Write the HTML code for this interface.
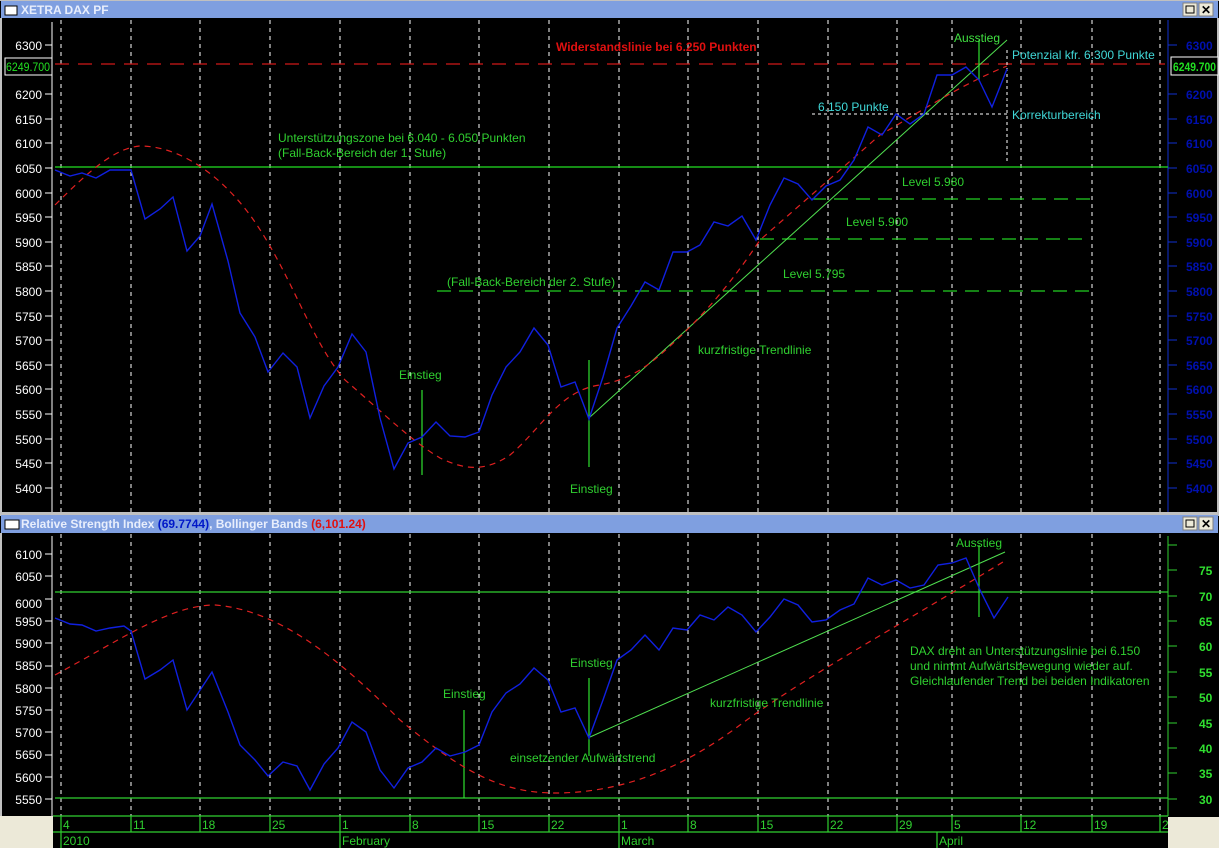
<!DOCTYPE html>
<html><head><meta charset="utf-8"><style>
html,body{margin:0;padding:0;background:#000;width:1219px;height:848px;overflow:hidden}
svg{display:block}
text{font-family:"Liberation Sans",Arial,sans-serif;font-size:12px}
</style></head><body>
<svg width="1219" height="848" viewBox="0 0 1219 848" xmlns="http://www.w3.org/2000/svg">
<rect width="1219" height="848" fill="#000"/>
<rect x="0" y="0" width="1219" height="1" fill="#c0c0c0"/>
<rect x="1" y="1" width="1217" height="17" fill="#7f9fe0"/>
<rect x="5" y="6" width="12" height="9" fill="#fff" stroke="#000" stroke-width="1"/>
<text x="21" y="14" fill="#e8eefc" font-weight="bold" font-size="12">XETRA DAX PF</text>
<rect x="1183" y="3" width="14" height="13" fill="#ece9d8" stroke="#808080"/><rect x="1186" y="6" width="8" height="7" fill="none" stroke="#000"/>
<rect x="1199" y="3" width="14" height="13" fill="#ece9d8" stroke="#808080"/><text x="1201" y="14" font-size="13" font-weight="bold" fill="#000">✕</text>
<rect x="0" y="18" width="2" height="495" fill="#c0c0c0"/>
<rect x="1217" y="18" width="2" height="495" fill="#c0c0c0"/>
<rect x="0" y="512" width="1219" height="4" fill="#c0c0c0"/>
<rect x="1" y="515" width="1217" height="18" fill="#7f9fe0"/>
<rect x="5" y="520" width="14" height="9" fill="#fff" stroke="#000"/>
<text x="21" y="528" fill="#e8eefc" font-weight="bold" font-size="12">Relative Strength Index <tspan fill="#0018c8">(69.7744)</tspan>, Bollinger Bands <tspan fill="#e01010">(6,101.24)</tspan></text>
<rect x="1183" y="517" width="14" height="13" fill="#ece9d8" stroke="#808080"/><rect x="1186" y="520" width="8" height="7" fill="none" stroke="#000"/>
<rect x="1199" y="517" width="14" height="13" fill="#ece9d8" stroke="#808080"/><text x="1201" y="528" font-size="13" font-weight="bold" fill="#000">✕</text>
<rect x="0" y="533" width="2" height="283" fill="#c0c0c0"/>
<rect x="0" y="816" width="53" height="32" fill="#ece9d8"/>

<g stroke="#fff" stroke-width="1" stroke-dasharray="4,4">
<path d="M61 20V512M131 20V512M200 20V512M270 20V512M340 20V512M410 20V512M479 20V512M549 20V512M619 20V512M688 20V512M758 20V512M828 20V512M897 20V512M952 20V512M1021 20V512M1092 20V512M1160 20V512"/>
<path d="M61 534V816M131 534V816M200 534V816M270 534V816M340 534V816M410 534V816M479 534V816M549 534V816M619 534V816M688 534V816M758 534V816M828 534V816M897 534V816M952 534V816M1021 534V816M1092 534V816M1160 534V816"/>
</g>

<g stroke="#fff"><path d="M52 22V512"/></g>
<g fill="#fff" text-anchor="end" font-size="12">
<text x="42" y="50">6300</text><text x="42" y="99">6200</text><text x="42" y="124">6150</text><text x="42" y="148">6100</text><text x="42" y="173">6050</text><text x="42" y="198">6000</text><text x="42" y="222">5950</text><text x="42" y="247">5900</text><text x="42" y="271">5850</text><text x="42" y="296">5800</text><text x="42" y="321">5750</text><text x="42" y="345">5700</text><text x="42" y="370">5650</text><text x="42" y="394">5600</text><text x="42" y="419">5550</text><text x="42" y="444">5500</text><text x="42" y="468">5450</text><text x="42" y="493">5400</text>
</g>
<g stroke="#fff"><path d="M45 45h7M45 94h7M45 119h7M45 143h7M45 168h7M45 193h7M45 217h7M45 242h7M45 266h7M45 291h7M45 316h7M45 340h7M45 365h7M45 389h7M45 414h7M45 439h7M45 463h7M45 488h7"/></g>
<rect x="5" y="58" width="47" height="17" fill="#000" stroke="#fff"/>
<text x="6" y="71" fill="#22e022" font-size="11" textLength="44" lengthAdjust="spacingAndGlyphs">6249.700</text>

<path d="M1168 20V512" stroke="#1030d0"/>
<g stroke="#1030d0"><path d="M1168 45h9M1168 94h9M1168 119h9M1168 143h9M1168 168h9M1168 193h9M1168 217h9M1168 242h9M1168 266h9M1168 291h9M1168 316h9M1168 340h9M1168 365h9M1168 389h9M1168 414h9M1168 439h9M1168 463h9M1168 488h9"/></g>
<g fill="#0010b0" font-weight="bold" font-size="12" font-family="Liberation Serif">
<text x="1186" y="50">6300</text><text x="1186" y="99">6200</text><text x="1186" y="124">6150</text><text x="1186" y="148">6100</text><text x="1186" y="173">6050</text><text x="1186" y="198">6000</text><text x="1186" y="222">5950</text><text x="1186" y="247">5900</text><text x="1186" y="271">5850</text><text x="1186" y="296">5800</text><text x="1186" y="321">5750</text><text x="1186" y="345">5700</text><text x="1186" y="370">5650</text><text x="1186" y="394">5600</text><text x="1186" y="419">5550</text><text x="1186" y="444">5500</text><text x="1186" y="468">5450</text><text x="1186" y="493">5400</text>
</g>
<rect x="1171" y="57" width="47" height="18" fill="#000" stroke="#fff"/>
<text x="1173" y="71" fill="#22e022" font-size="11" font-weight="bold" textLength="43" lengthAdjust="spacingAndGlyphs">6249.700</text>

<path d="M55 64H1165" stroke="#d01818" stroke-width="1.3" stroke-dasharray="14,9"/>
<path d="M55 167H1168" stroke="#22e022" stroke-width="1.2"/>
<g stroke="#22d022" stroke-width="1.2" stroke-dasharray="14,8">
<path d="M812 199H1090M760 239H1090M437 291H1090"/></g>
<path d="M812 114H1007M1007 50V162" stroke="#fff" stroke-dasharray="3,3"/>
<path d="M590 417L1007 40" stroke="#50e050"/>
<path d="M979 40V80M422 390V475M589 360V467" stroke="#30e030" stroke-width="1.2"/>
<path d="M55 205 C90 170 115 148 140 146 C180 146 220 175 250 215 C290 270 310 340 345 380 C380 410 410 440 440 458 C465 470 485 472 510 455 C540 430 560 390 600 385 C625 380 640 372 660 355 C700 320 730 285 760 240 C800 205 840 170 880 135 C920 112 960 85 1007 66" fill="none" stroke="#e02020" stroke-width="1.2" stroke-dasharray="6,5"/>
<polyline fill="none" stroke="#1020e0" stroke-width="1.4" points="55,170 70,176 82,173 96,178 110,170 124,170 131,170 145,219 160,209 173,197 187,251 200,236 212,204 228,261 240,313 255,337 268,372 283,353 297,367 310,418 324,386 338,367 352,334 366,352 380,418 394,469 408,443 422,437 436,422 450,436 465,437 479,432 492,395 506,367 520,352 534,328 548,345 561,387 575,382 589,419 603,377 617,328 631,306 645,282 659,290 673,252 687,252 700,245 714,222 728,226 742,216 756,240 770,205 784,178 798,184 812,200 826,186 840,180 854,160 868,127 882,135 896,114 910,124 924,114 937,75 952,75 966,67 979,80 992,107 1007,69"/>

<text x="556" y="51" fill="#e01010" font-weight="bold">Widerstandslinie bei 6.250 Punkten</text>
<text x="954" y="42" fill="#40e040">Ausstieg</text>
<text x="1012" y="59" fill="#40d8d8">Potenzial kfr. 6.300 Punkte</text>
<text x="818" y="111" fill="#40d8d8">6.150 Punkte</text>
<text x="1012" y="119" fill="#40d8d8">Korrekturbereich</text>
<text x="278" y="142" fill="#30d030">Unterstützungszone bei 6.040 - 6.050 Punkten</text>
<text x="278" y="157" fill="#30d030">(Fall-Back-Bereich der 1. Stufe)</text>
<text x="902" y="186" fill="#30d030">Level 5.980</text>
<text x="846" y="226" fill="#30d030">Level 5.900</text>
<text x="783" y="278" fill="#30d030">Level 5.795</text>
<text x="447" y="286" fill="#30d030">(Fall-Back-Bereich der 2. Stufe)</text>
<text x="698" y="354" fill="#30d030">kurzfristige Trendlinie</text>
<text x="399" y="379" fill="#30d030">Einstieg</text>
<text x="570" y="493" fill="#30d030">Einstieg</text>

<path d="M52 536V816" stroke="#fff"/>
<g fill="#fff" text-anchor="end" font-size="12">
<text x="42" y="559">6100</text><text x="42" y="581">6050</text><text x="42" y="608">6000</text><text x="42" y="626">5950</text><text x="42" y="648">5900</text><text x="42" y="670">5850</text><text x="42" y="693">5800</text><text x="42" y="715">5750</text><text x="42" y="737">5700</text><text x="42" y="759">5650</text><text x="42" y="782">5600</text><text x="42" y="804">5550</text>
</g>
<g stroke="#fff"><path d="M45 554h7M45 576h7M45 599h7M45 621h7M45 643h7M45 666h7M45 688h7M45 710h7M45 732h7M45 755h7M45 777h7M45 799h7"/></g>

<path d="M1168 536V816" stroke="#30d030"/>
<g stroke="#30d030"><path d="M1168 545h9M1168 570h9M1168 596h9M1168 621h9M1168 646h9M1168 672h9M1168 697h9M1168 723h9M1168 748h9M1168 773h9M1168 799h9"/></g>
<g fill="#30e030" font-weight="bold" font-size="13" font-family="Liberation Serif">
<text x="1199" y="575">75</text><text x="1199" y="601">70</text><text x="1199" y="626">65</text><text x="1199" y="651">60</text><text x="1199" y="677">55</text><text x="1199" y="702">50</text><text x="1199" y="728">45</text><text x="1199" y="753">40</text><text x="1199" y="778">35</text><text x="1199" y="804">30</text>
</g>

<path d="M55 592H1168M55 798H1168" stroke="#30d030" stroke-width="1.2"/>
<path d="M590 737L1005 552" stroke="#50e050"/>
<path d="M464 710V798M589 678V756M979 545V617" stroke="#30e030" stroke-width="1.2"/>
<path d="M55 675 C120 640 170 605 215 605 C280 610 340 660 400 720 C460 770 500 793 555 793 C620 793 680 770 740 725 C800 680 900 625 1003 562" fill="none" stroke="#e02020" stroke-width="1.2" stroke-dasharray="6,5"/>
<polyline fill="none" stroke="#1020e0" stroke-width="1.4" points="55,618 70,624 82,625 96,631 110,628 124,626 131,631 145,679 160,670 173,660 187,710 212,672 228,712 240,745 255,760 268,776 283,762 297,766 310,790 324,764 338,748 352,722 366,732 380,770 394,788 408,768 422,762 436,748 450,756 465,752 479,745 492,712 506,693 520,684 534,668 548,680 561,712 575,708 589,738 603,700 617,660 631,650 645,635 659,650 673,628 687,630 700,615 714,620 728,607 742,615 756,632 770,617 784,599 798,605 812,622 826,620 840,610 854,604 868,578 882,585 896,580 910,588 924,585 938,565 952,563 966,558 980,590 994,618 1008,597"/>

<text x="956" y="547" fill="#30d030">Ausstieg</text>
<text x="570" y="667" fill="#30d030">Einstieg</text>
<text x="443" y="698" fill="#30d030">Einstieg</text>
<text x="710" y="707" fill="#30d030">kurzfristige Trendlinie</text>
<text x="510" y="762" fill="#30d030">einsetzender Aufwärtstrend</text>
<text x="910" y="655" fill="#30d030">DAX dreht an Unterstützungslinie bei 6.150</text>
<text x="910" y="670" fill="#30d030">und nimmt Aufwärtsbewegung wieder auf.</text>
<text x="910" y="685" fill="#30d030">Gleichlaufender Trend bei beiden Indikatoren</text>

<path d="M53 816H1168M53 832H1168" stroke="#30d030" stroke-width="1.2"/>
<g stroke="#30d030" stroke-width="1.2"><path d="M61 816V848M131 816V832M200 816V832M270 816V832M340 816V848M410 816V832M479 816V832M549 816V832M619 816V848M688 816V832M758 816V832M828 816V832M897 816V832M937 832V848M952 816V832M1021 816V832M1092 816V832M1160 816V832"/></g>
<g fill="#30d030" font-size="12">
<text x="63" y="829">4</text><text x="133" y="829">11</text><text x="202" y="829">18</text><text x="272" y="829">25</text><text x="342" y="829">1</text><text x="412" y="829">8</text><text x="481" y="829">15</text><text x="551" y="829">22</text><text x="621" y="829">1</text><text x="690" y="829">8</text><text x="760" y="829">15</text><text x="830" y="829">22</text><text x="899" y="829">29</text><text x="954" y="829">5</text><text x="1023" y="829">12</text><text x="1094" y="829">19</text><text x="1162" y="829">2</text>
<text x="63" y="845">2010</text><text x="342" y="845">February</text><text x="621" y="845">March</text><text x="939" y="845">April</text>
</g>
<rect x="1168" y="817" width="51" height="31" fill="#ece9d8"/>
</svg>
</body></html>
